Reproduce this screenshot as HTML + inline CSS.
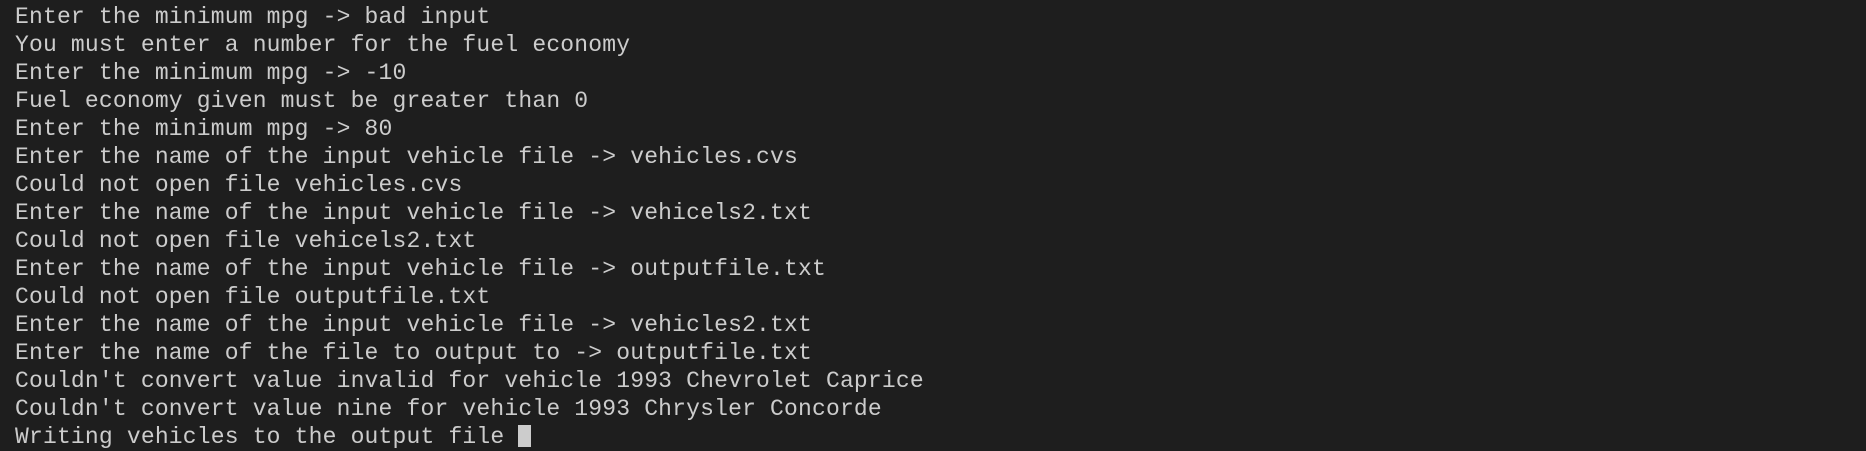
<!DOCTYPE html>
<html><head><meta charset="utf-8"><style>
html,body{margin:0;padding:0;background:#1e1e1e;width:1866px;height:426px;overflow:hidden}
pre{position:absolute;left:15px;top:-25.5px;margin:0;font-family:"Liberation Mono","DejaVu Sans Mono",monospace;font-size:23px;line-height:28px;color:#cccccc;letter-spacing:0.18px}
.cur{display:inline-block;width:13px;height:22px;background:#cccccc;vertical-align:top;margin-top:2px}
</style></head><body>
<pre>                                      _                   ,       ,  ,  ,    ,
Enter the minimum mpg -&gt; bad input
You must enter a number for the fuel economy
Enter the minimum mpg -&gt; -10
Fuel economy given must be greater than 0
Enter the minimum mpg -&gt; 80
Enter the name of the input vehicle file -&gt; vehicles.cvs
Could not open file vehicles.cvs
Enter the name of the input vehicle file -&gt; vehicels2.txt
Could not open file vehicels2.txt
Enter the name of the input vehicle file -&gt; outputfile.txt
Could not open file outputfile.txt
Enter the name of the input vehicle file -&gt; vehicles2.txt
Enter the name of the file to output to -&gt; outputfile.txt
Couldn't convert value invalid for vehicle 1993 Chevrolet Caprice
Couldn't convert value nine for vehicle 1993 Chrysler Concorde
Writing vehicles to the output file <span class="cur"></span></pre>
</body></html>
